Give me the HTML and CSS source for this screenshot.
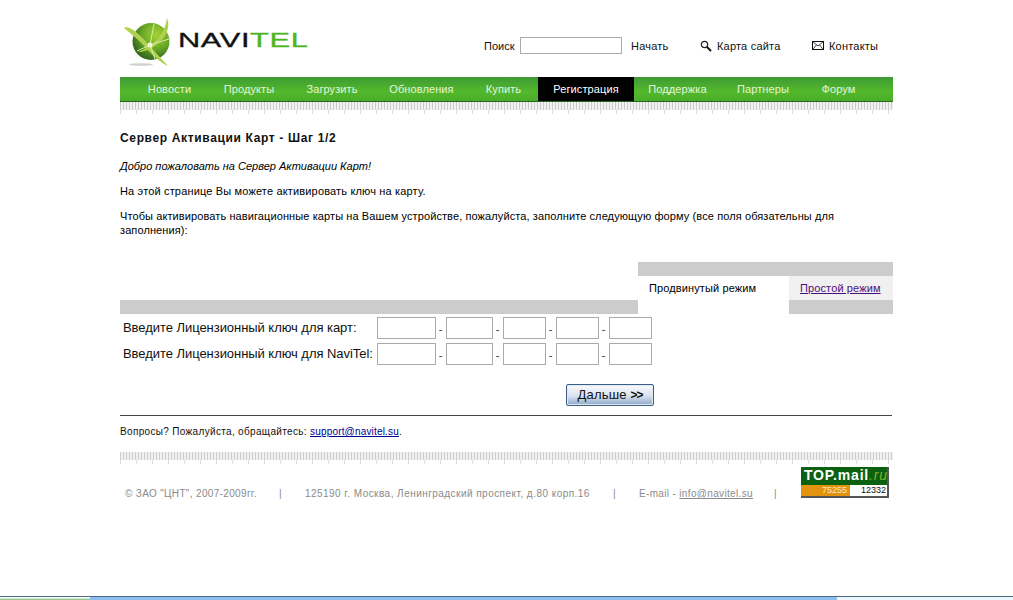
FILE: index.html
```html
<!DOCTYPE html>
<html lang="ru">
<head>
<meta charset="utf-8">
<title>Navitel</title>
<link rel="stylesheet" href="styles.css">
</head>
<body>
<div class="page">
  <header class="top">
    <a class="logo">
      <svg class="globe" width="52" height="54" viewBox="0 0 52 54">
        <defs>
          <radialGradient id="g" cx="64%" cy="32%" r="78%">
            <stop offset="0" stop-color="#a6d334"/>
            <stop offset=".5" stop-color="#66a626"/>
            <stop offset="1" stop-color="#23541b"/>
          </radialGradient>
        </defs>
        <ellipse cx="21" cy="49.500" rx="12" ry="1.300" fill="#ccd2cc"/>
        <circle cx="31" cy="26.500" r="18.500" fill="url(#g)"/>
        <path d="M4 13C6 11 11 13 16 17C23 22 32 34 48 51C44 50 34 42 26 33C18 24 10 18 4 13Z" fill="#aed14f"/>
        <path d="M47 3C51 12 46 23 35 31C29 35 23 37 18 37C25 34 33 29 39 22C44 16 46 9 47 3Z" fill="#aed14f"/>
        <path d="M30 30L34 9M30 30L49 24M30 30L17 36M30 30L35 44" stroke="#d9ebaa" stroke-width="1" fill="none"/>
        <circle cx="30" cy="30" r="2.500" fill="#f1f8d8"/>
      </svg>
      <span class="wordmark"><span class="wm-dark">NAVI</span><span class="wm-green">TEL</span></span>
    </a>
    <div class="tools">
      <label class="search-label" for="q">Поиск</label>
      <input class="search-input" id="q" type="text">
      <a class="tool tool-go">Начать</a>
      <a class="tool tool-map">
        <svg width="12" height="12" viewBox="0 0 12 12"><circle cx="4.500" cy="4.500" r="3.200" fill="#fff" stroke="#222" stroke-width="1.200"/><path d="M7 7L11 11" stroke="#111" stroke-width="2"/></svg>
        Карта сайта
      </a>
      <a class="tool tool-contact">
        <svg width="12" height="9" viewBox="0 0 12 9"><rect x=".5" y=".5" width="11" height="8" fill="#fff" stroke="#111"/><path d="M.5 .5L6 5L11.500 .5M.5 8.500L4.500 4M11.500 8.500L7.500 4" fill="none" stroke="#111" stroke-width=".8"/></svg>
        Контакты
      </a>
    </div>
  </header>

  <nav class="menu">
    <a class="menu-item">Новости</a>
    <a class="menu-item">Продукты</a>
    <a class="menu-item">Загрузить</a>
    <a class="menu-item">Обновления</a>
    <a class="menu-item">Купить</a>
    <a class="menu-item menu-active">Регистрация</a>
    <a class="menu-item">Поддержка</a>
    <a class="menu-item">Партнеры</a>
    <a class="menu-item">Форум</a>
  </nav>
  <div class="ruler"></div>

  <main class="content">
    <h1 class="title">Сервер Активации Карт - Шаг 1/2</h1>
    <p class="welcome">Добро пожаловать на Сервер Активации Карт!</p>
    <p class="para para-a">На этой странице Вы можете активировать ключ на карту.</p>
    <p class="para para-b">Чтобы активировать навигационные карты на Вашем устройстве, пожалуйста, заполните следующую форму (все поля обязательны для заполнения):</p>

    <div class="tabs">
      <div class="tabs-fill"></div>
      <div class="tab tab-on">Продвинутый режим</div>
      <div class="tab tab-off"><a class="tab-link">Простой режим</a></div>
    </div>

    <form class="keys">
      <div class="key-row">
        <span class="key-label">Введите Лицензионный ключ для карт:</span>
        <input class="key key-1" type="text"><span class="dash">-</span>
        <input class="key key-2" type="text"><span class="dash">-</span>
        <input class="key key-3" type="text"><span class="dash">-</span>
        <input class="key key-3" type="text"><span class="dash">-</span>
        <input class="key key-3" type="text">
      </div>
      <div class="key-row">
        <span class="key-label">Введите Лицензионный ключ для NaviTel:</span>
        <input class="key key-1" type="text"><span class="dash">-</span>
        <input class="key key-2" type="text"><span class="dash">-</span>
        <input class="key key-3" type="text"><span class="dash">-</span>
        <input class="key key-3" type="text"><span class="dash">-</span>
        <input class="key key-3" type="text">
      </div>
      <div class="next-row"><button class="next" type="button">Дальше <b>&gt;&gt;</b></button></div>
    </form>

    <div class="help">Вопросы? Пожалуйста, обращайтесь: <a class="help-link">support@navitel.su</a>.</div>
  </main>

  <div class="ruler ruler-foot"></div>

  <footer class="foot">
    <span class="foot-copy">© ЗАО "ЦНТ", 2007-2009гг.</span>
    <span class="foot-sep sep-1">|</span>
    <span class="foot-addr">125190 г. Москва, Ленинградский проспект, д.80 корп.16</span>
    <span class="foot-sep sep-2">|</span>
    <span class="foot-mail">E-mail - <a class="foot-link">info@navitel.su</a></span>
    <span class="foot-sep sep-3">|</span>
    <div class="counter">
      <div class="counter-top"><span class="c-white">TOP.mail</span><span class="c-green">.ru</span></div>
      <div class="counter-nums"><span class="c-orange">75255</span><span class="c-total">12332</span></div>
    </div>
  </footer>
</div>
<div class="taskbar">
  <div class="tb-left"></div>
  <div class="tb-mid"></div>
  <div class="tb-right"></div>
</div>
</body>
</html>
```
FILE: styles.css
```css
* { box-sizing: border-box; }
html, body { margin: 0; padding: 0; height: 600px; overflow: hidden; background: #fff; }
body { font-family: "Liberation Sans", Arial, sans-serif; color: #000; position: relative; }
.page { width: 773px; margin-left: 120px; }

.top { height: 77px; display: flex; position: relative; }
.logo { display: flex; align-items: flex-start; }
.globe { margin-top: 15px; flex: none; }
.wordmark { font-size: 20px; line-height: 20px; margin: 30px 0 0 6px; letter-spacing: .4px; transform: scaleX(1.54); transform-origin: left; -webkit-text-stroke: .3px currentColor; white-space: nowrap; }
.wm-dark { color: #111; }
.wm-green { color: #4db51f; }
.tools { position: absolute; left: 364px; top: 37px; height: 17px; display: flex; align-items: center; font-size: 11px; color: #111; white-space: nowrap; letter-spacing: .2px; }
.search-label { width: 36px; letter-spacing: 0; }
.search-input { width: 102px; height: 17px; border: 1px solid #aaa; margin: 0; padding: 0; background: #fff; }
.tool { display: flex; align-items: center; gap: 5px; }
.tool-go { margin-left: 9px; width: 69px; }
.tool-map { width: 112px; }

.menu { height: 25px; display: grid; grid-template-columns: 77px 82px 84px 95px 69px 96px 87px 84px 67px; padding-left: 11px; background: linear-gradient(#3f9a35, #52b92c 60%, #4bad2a); border-bottom: 1px solid #24661a; font-size: 11px; color: #e4f4dc; }
.menu-item { height: 24px; line-height: 24px; text-align: center; letter-spacing: .1px; white-space: nowrap; }
.menu-active { background: #000; color: #fff; }
.ruler { height: 12px; background:
  repeating-linear-gradient(90deg, #dcdcdc 0 1px, transparent 1px 16px) 0 8px / 100% 4px no-repeat,
  repeating-linear-gradient(90deg, #cdcdcd 0 1px, #f1f1f1 1px 3px) 0 0 / 100% 8px no-repeat; }

.content { padding-top: 16px; font-size: 11px; }
.title { margin: 0; font-size: 12px; line-height: 16px; font-weight: bold; letter-spacing: .65px; color: #111; }
.welcome { margin: 13px 0 0; font-style: italic; line-height: 14px; }
.para { margin: 0; line-height: 14px; letter-spacing: .1px; }
.para-a { margin-top: 11px; letter-spacing: .16px; }
.para-b { margin-top: 11px; width: 760px; }

.tabs { margin-top: 25px; height: 52px; display: flex; }
.tabs-fill { width: 518px; height: 14px; align-self: flex-end; background: #ccc; }
.tab { font-size: 11px; letter-spacing: .12px; }
.tab-on { width: 151px; padding: 21px 0 0 11px; line-height: 11px; background: linear-gradient(#ccc 14px, #fff 14px); }
.tab-off { width: 104px; padding: 21px 0 0 11px; line-height: 11px; background: linear-gradient(#ccc 14px, #f0f0f0 14px, #f0f0f0 38px, #ccc 38px); }
.tab-link { color: #4b0f7a; text-decoration: underline; }

.keys { padding-top: 3px; }
.key-row { height: 26px; display: flex; align-items: flex-start; }
.key-label { width: 257px; padding-left: 3px; font-size: 13px; line-height: 22px; letter-spacing: -.05px; white-space: nowrap; color: #111; }
.key { height: 22px; border: 1px solid #aaa; padding: 0; margin: 0; background: #fff; }
.key-1 { width: 59px; }
.key-2 { width: 47px; }
.key-3 { width: 43px; }
.dash { width: 10px; padding-right: 1px; text-align: center; font-size: 11px; line-height: 24px; color: #333; }
.next-row { height: 24px; margin-top: 15px; padding-left: 446px; }
.next { width: 88px; height: 22px; padding: 0; font-family: inherit; font-size: 13px; line-height: 20px; letter-spacing: .2px; color: #111; border: 1px solid #3d5f86; border-radius: 2px; background: linear-gradient(#fafbfd, #d9e2ee 55%, #8fa8c9); box-shadow: inset 0 0 0 1px #dfe7f1; }
.next b { font-size: 12px; letter-spacing: -1px; }

.help { margin-top: 7px; width: 772px; border-top: 1px solid #444; padding-top: 10px; font-size: 10px; line-height: 12px; letter-spacing: .33px; color: #111; }
.help-link { color: #00008b; text-decoration: underline; letter-spacing: .18px; }

.ruler-foot { margin-top: 14px; }

.foot { position: relative; height: 46px; font-size: 10px; letter-spacing: .34px; color: #8a8a8a; white-space: nowrap; }
.foot-copy, .foot-sep, .foot-addr, .foot-mail { position: absolute; top: 24px; line-height: 12px; }
.foot-copy { left: 5px; }
.sep-1 { left: 159px; }
.foot-addr { left: 185px; letter-spacing: .46px; }
.sep-2 { left: 493px; }
.foot-mail { left: 519px; }
.sep-3 { left: 654px; }
.foot-link { text-decoration: underline; }
.counter { position: absolute; left: 681px; top: 3px; width: 88px; height: 31px; background: #0b6110; border-right: 2px solid #555; border-bottom: 2px solid #555; letter-spacing: 0; }
.counter-top { height: 18px; font-size: 14px; line-height: 17px; font-weight: bold; padding-left: 3px; letter-spacing: .8px; }
.c-white { color: #fff; }
.c-green { color: #7fb02c; font-style: italic; font-weight: normal; }
.counter-nums { height: 11px; display: flex; font-size: 9px; line-height: 11px; text-align: right; }
.c-orange { width: 49px; background: #e4930f; color: #fbe9c6; padding-right: 3px; }
.c-total { width: 37px; background: #fff; color: #111; padding-right: 1px; }

.taskbar { position: absolute; left: 0; right: 0; top: 596px; height: 4px; display: flex; border-top: 1px solid #4a6a80; }
.tb-left { width: 90px; background: linear-gradient(#fff 1px, #9bcb95 2px); }
.tb-mid { width: 747px; background: #8ebdee; }
.tb-right { flex: 1; background: #eef7fd; }
```
